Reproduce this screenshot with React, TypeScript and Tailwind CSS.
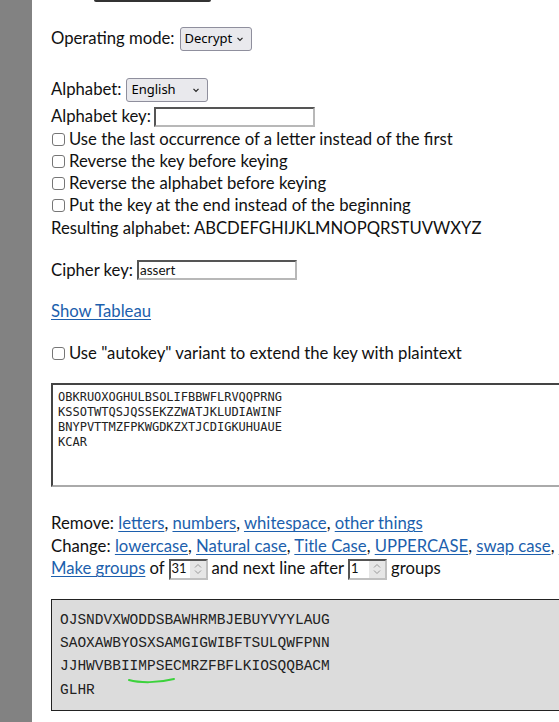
import React from 'react';

const font = { fontFamily: 'Lato, "Noto Sans", sans-serif' };

const Check = ({ label }: { label: string }) => (
  <div className="flex items-center h-[22.25px] whitespace-nowrap">
    <span className="ml-[1px] w-[13px] h-[13px] border border-[#767676] rounded-[3px] bg-white mr-[4px]"></span>
    <span>{label}</span>
  </div>
);

const Select = ({ value, w }: { value: string; w: string }) => (
  <span
    className={`inline-flex items-center justify-between h-[24px] ${w} pl-[4px] pr-[4px] bg-[#e9e9ed] border border-[#8f8f9d] rounded-[3px] text-[13px] text-black`}
    style={{ fontFamily: '"Noto Sans", sans-serif' }}
  >
    <span>{value}</span>
    <svg width="10" height="10" viewBox="0 0 10 10" className="mr-[2px]">
      <path d="M2.5 3.8 L5 6.3 L7.5 3.8" fill="none" stroke="#222" strokeWidth="1.2" />
    </svg>
  </span>
);

const TextInput = ({ w, value }: { w: string; value?: string }) => (
  <span
    className={`inline-flex items-center h-[20px] ${w} border-2 border-t-[#555] border-l-[#555] border-r-[#b8b8b8] border-b-[#b8b8b8] bg-white text-[13.5px] leading-none pl-[1px]`}
  >
    {value}
  </span>
);

const NumInput = ({ value, w }: { value: string; w: string }) => (
  <span
    className={`inline-flex items-stretch h-[21px] ${w} border-2 border-t-[#555] border-l-[#555] border-r-[#c0c0c0] border-b-[#c0c0c0] bg-white text-[13px] mx-[4px]`}
  >
    <span className="flex-1 flex items-center pl-[1px]">{value}</span>
    <span className="w-[16px] bg-[#e6e6e6] flex items-center justify-center">
      <svg width="10" height="14" viewBox="0 0 10 14">
        <path d="M2 5.5 L5 2.5 L8 5.5 M2 8.5 L5 11.5 L8 8.5" fill="none" stroke="#999" strokeWidth="1" />
      </svg>
    </span>
  </span>
);

const A = ({ children }: { children: React.ReactNode }) => (
  <span className="text-[#1c5fad] underline underline-offset-[2px]">{children}</span>
);

export default function App() {
  return (
    <div className="flex h-[722px] w-[559px] overflow-hidden bg-white text-[16.7px] text-[#111]" style={font}>
      <div className="w-[32px] shrink-0 bg-[#828282]"></div>
      <div className="pl-[19px] w-[760px] shrink-0">
        <div className="ml-[43px] w-[117px] h-[2px] bg-[#333] rounded-b-[2px]"></div>

        <div className="mt-[25px] h-[24px] flex items-center whitespace-nowrap">
          <span className="mr-[5px]">Operating mode:</span>
          <Select value="Decrypt" w="w-[72px]" />
        </div>

        <div className="mt-[27px] h-[24px] flex items-center whitespace-nowrap">
          <span className="mr-[5px]">Alphabet:</span>
          <Select value="English" w="w-[82px]" />
        </div>

        <div className="mt-[5px] h-[20px] flex items-center whitespace-nowrap">
          <span className="mr-[3px]">Alphabet key:</span>
          <TextInput w="w-[161px]" />
        </div>

        <div className="mt-[1px]">
          <Check label="Use the last occurrence of a letter instead of the first" />
          <Check label="Reverse the key before keying" />
          <Check label="Reverse the alphabet before keying" />
          <Check label="Put the key at the end instead of the beginning" />
          <div className="flex items-center h-[22.25px] whitespace-nowrap">
            Resulting alphabet: ABCDEFGHIJKLMNOPQRSTUVWXYZ
          </div>
        </div>

        <div className="mt-[21px] h-[20px] flex items-center whitespace-nowrap">
          <span className="mr-[4px]">Cipher key:</span>
          <TextInput w="w-[160px]" value="assert" />
        </div>

        <div className="mt-[20.5px] h-[22px] flex items-center">
          <A>Show Tableau</A>
        </div>

        <div className="mt-[20px] h-[22px]">
          <Check label={'Use "autokey" variant to extend the key with plaintext'} />
        </div>

        <div
          className="mt-[18px] h-[104px] w-[700px] border-2 border-t-[#444] border-l-[#444] border-r-[#aaa] border-b-[#aaa] pl-[5px] pt-[5px] text-[12px] leading-[15px] text-[#222]"
          style={{ fontFamily: '"DejaVu Sans Mono", monospace' }}
        >
          <div>OBKRUOXOGHULBSOLIFBBWFLRVQQPRNG</div>
          <div>KSSOTWTQSJQSSEKZZWATJKLUDIAWINF</div>
          <div>BNYPVTTMZFPKWGDKZXTJCDIGKUHUAUE</div>
          <div>KCAR</div>
        </div>

        <div className="mt-[26px] whitespace-nowrap">
          <div className="h-[22.5px] flex items-center">
            <span>
              Remove: <A>letters</A>, <A>numbers</A>, <A>whitespace</A>, <A>other things</A>
            </span>
          </div>
          <div className="h-[22.5px] flex items-center">
            <span>
              Change: <A>lowercase</A>, <A>Natural case</A>, <A>Title Case</A>, <A>UPPERCASE</A>,{' '}
              <A>swap case</A>, <A>reverse</A>
            </span>
          </div>
          <div className="h-[22.5px] flex items-center">
            <A>Make groups</A>
            <span className="ml-[4px]">of</span>
            <NumInput value="31" w="w-[39px]" />
            <span>and next line after</span>
            <NumInput value="1" w="w-[39px]" />
            <span>groups</span>
          </div>
        </div>

        <div
          className="relative mt-[18.5px] h-[112px] w-[700px] border border-[#222] bg-[#dcdcdc] pl-[8px] pt-[9px] text-[14.5px] leading-[23.3px] text-[#222]"
          style={{ fontFamily: '"Liberation Mono", monospace' }}
        >
          <div>OJSNDVXWODDSBAWHRMBJEBUYVYYLAUG</div>
          <div>SAOXAWBYOSXSAMGIGWIBFTSULQWFPNN</div>
          <div>JJHWVBBIIMPSECMRZFBFLKIOSQQBACM</div>
          <div>GLHR</div>
          <svg className="absolute left-[76px] top-[77px]" width="48" height="8" viewBox="0 0 48 8">
            <path d="M1 3 C 12 6, 30 6, 46 2" fill="none" stroke="#3cd23c" strokeWidth="2" strokeLinecap="round" />
          </svg>
        </div>
      </div>
    </div>
  );
}
